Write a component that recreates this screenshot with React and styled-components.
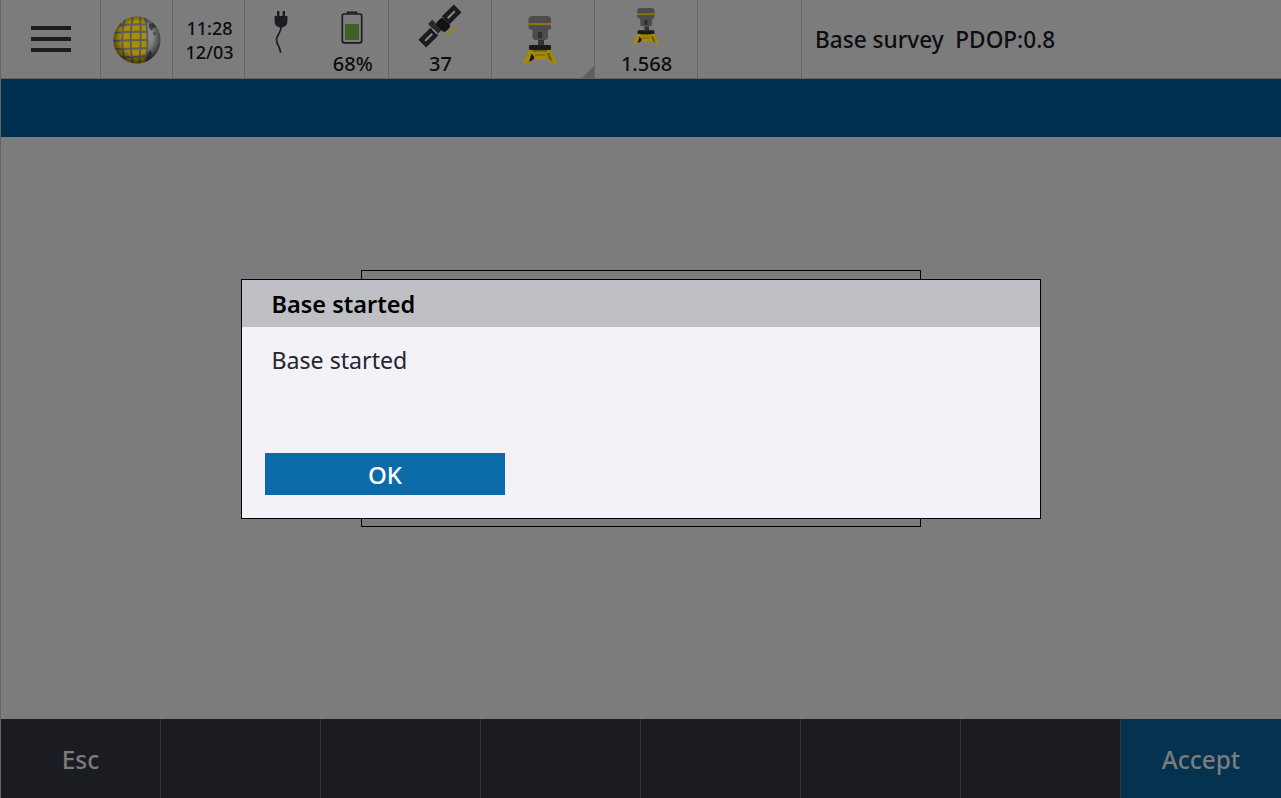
import styled, { createGlobalStyle } from 'styled-components';

const softKeys = ['Esc', '', '', '', '', '', ''];

const GlobalStyle = createGlobalStyle`
  html, body {
    margin: 0;
    padding: 0;
    height: 100%;
    background: #7c7c7d;
    font-family: "Noto Sans", "Open Sans", sans-serif;
    overflow: hidden;
  }
  #root {
    height: 100%;
  }
`;

const Globe = () => (
  <svg width="50" height="50" viewBox="0 0 50 50">
    <defs>
      <radialGradient id="sphere" cx="0.68" cy="0.4" r="0.62">
        <stop offset="0" stopColor="#949494" />
        <stop offset="0.6" stopColor="#737373" />
        <stop offset="1" stopColor="#3c3c3c" />
      </radialGradient>
      <radialGradient id="shade" cx="0.5" cy="0.45" r="0.52">
        <stop offset="0.65" stopColor="#000" stopOpacity="0" />
        <stop offset="1" stopColor="#000" stopOpacity="0.5" />
      </radialGradient>
      <clipPath id="ball">
        <circle cx="25" cy="25" r="23.5" />
      </clipPath>
    </defs>
    <circle cx="25" cy="25" r="23.5" fill="url(#sphere)" />
    <g clipPath="url(#ball)">
      <path d="M0 0H31C35 15 36 33 32 50H0Z" fill="#a88d07" />
      <path d="M37 9l5-1 3 4-4 1-1 3-3-3zM41 17l3 1-1 3zM35 40l3-5 2 3-2 6-3 3z" fill="#444" />
      <g fill="none" stroke="#5c5c5c" strokeWidth="1.900">
        <path d="M3 11C12 9.500 24 9 34 9.500" />
        <path d="M0 18C12 17 24 16.500 35 17" />
        <path d="M0 26C12 25.500 24 25 35.500 25" />
        <path d="M0 34C12 34 24 33.500 35 33" />
        <path d="M3 42C12 42.500 24 42 33.500 41" />
        <path d="M14 1C9 15 9 35 14 49" />
        <path d="M21 0C18 16 18 34 21 50" />
        <path d="M28 0C29 16 29 34 27 50" />
        <path d="M33 1C36 16 36.500 34 33 49" />
      </g>
    </g>
    <circle cx="25" cy="25" r="23.5" fill="url(#shade)" />
  </svg>
);

const Plug = () => (
  <svg width="14" height="42" viewBox="0 0 14 42">
    <path d="M3 0h2.400v5H8.600V0H11v5h2.400v5.500C13.400 14 10.500 16 8 16.500h-2C3 16 .6 14 .6 10.500V5H3z" fill="#1b1b22" />
    <path d="M7 16C7.500 21 2.500 24 2.500 29C2.500 33 6 36 6.500 41" fill="none" stroke="#1b1b22" strokeWidth="1.700" strokeLinecap="round" />
  </svg>
);

const Battery = () => (
  <svg width="22" height="33" viewBox="0 0 22 33">
    <path d="M6.500 3V1.200h9V3" fill="none" stroke="#1b1b22" strokeWidth="1.500" />
    <rect x="1.300" y="3" width="19.400" height="28.800" rx="2" fill="none" stroke="#1b1b22" strokeWidth="1.700" />
    <rect x="4" y="13" width="14" height="16" fill="#3f5f27" />
  </svg>
);

const Satellite = () => (
  <svg width="50" height="50" viewBox="0 0 50 50">
    <g transform="rotate(-45 25 25)">
      <rect x="0" y="19.500" width="17" height="11" fill="#1b1b1e" />
      <rect x="4" y="24" width="10" height="2" fill="#8a8a8a" />
      <rect x="33" y="19.500" width="17" height="11" fill="#1b1b1e" />
      <rect x="36" y="24" width="10" height="2" fill="#8a8a8a" />
      <rect x="17" y="22" width="16" height="6" fill="#b0b0b0" />
      <rect x="18" y="15" width="6" height="14" fill="#29292b" />
      <rect x="23" y="20" width="10" height="13" rx="3.500" fill="#121214" />
      <rect x="21" y="36" width="15" height="1.800" fill="#9a840e" />
    </g>
  </svg>
);

// receiver on a tripod, scaled by the width prop
const Rover = ({ width }) => (
  <svg width={width} viewBox="0 0 34 47">
    <path d="M5.500 3C5.500 1 7.500 0 10 0h13.500c2.500 0 4.500 1 4.500 3v8c0 2-1.500 3-3 3v7c0 2-1.500 3-3 3H12.500c-1.500 0-3-1-3-3v-7c-1.500 0-4-1-4-3z" fill="#4c4c4d" />
    <path d="M5.500 7h22.500v2.200H5.500z" fill="#8a7512" />
    <rect x="15" y="16" width="4" height="6" fill="#2e2e2f" />
    <rect x="15" y="24" width="6" height="5" fill="#333334" />
    <rect x="6" y="29" width="22" height="5" rx="1" fill="#1a1a1c" />
    <path d="M6 34H28L34 47H28L25 44H9L6 47H0Z" fill="#a48a0c" />
    <path d="M6 46L8.500 37.500L11.500 41L10.500 43.500z" fill="#161616" />
    <path d="M24 37h2.500l3.500 9-4.500-3z" fill="#6f5a14" />
    <rect x="12" y="38" width="10" height="2" fill="#8a7208" />
    <rect x="10" y="34" width="14" height="1.600" fill="#6f5e0e" />
  </svg>
);

const MenuIcon = () => (
  <svg width="40" height="26" viewBox="0 0 40 26" fill="#1b1b22">
    <rect width="40" height="4" />
    <rect y="11" width="40" height="4" />
    <rect y="22" width="40" height="4" />
  </svg>
);

export default function App() {
  return (
    <>
      <GlobalStyle />
      <Page>
        <TopBar>
          <MenuCell>
            <MenuIcon />
          </MenuCell>
          <IconCell>
            <Globe />
          </IconCell>
          <ClockCell>
            <span>11:28</span>
            <span>12/03</span>
          </ClockCell>
          <PowerCell>
            <PowerItem>
              <Plug />
            </PowerItem>
            <PowerItem>
              <Battery />
              <BatteryReading>68%</BatteryReading>
            </PowerItem>
          </PowerCell>
          <StatusCell>
            <Slot>
              <Satellite />
            </Slot>
            <Reading>37</Reading>
          </StatusCell>
          <StatusCell>
            <RoverSlot>
              <Rover width={34} />
            </RoverSlot>
            <Corner />
          </StatusCell>
          <StatusCell>
            <Slot>
              <Rover width={26} />
            </Slot>
            <Reading>1.568</Reading>
          </StatusCell>
          <SpareCell />
          <Title>Base survey  PDOP:0.8</Title>
        </TopBar>
        <Banner />
        <Content />
        <SoftKeys>
          {softKeys.map((label, i) => (
            <SoftKey key={i}>{label}</SoftKey>
          ))}
          <AcceptKey>Accept</AcceptKey>
        </SoftKeys>
      </Page>
      <Overlay>
        <BackPanel />
        <Dialog>
          <DialogTitle>Base started</DialogTitle>
          <DialogBody>
            <Message>Base started</Message>
            <OkButton>OK</OkButton>
          </DialogBody>
        </Dialog>
      </Overlay>
    </>
  );
}

const Page = styled.div`
  height: 798px;
  display: flex;
  flex-direction: column;
  border-left: 1px solid #656566;
  background: #7c7c7d;
`;

const TopBar = styled.header`
  height: 78px;
  flex: none;
  display: flex;
  border-bottom: 1px solid #656566;
`;

const Cell = styled.div`
  flex: none;
  height: 78px;
  box-sizing: border-box;
  border-right: 1px solid #656566;
  position: relative;
  color: #0c0c11;
`;

const MenuCell = styled(Cell)`
  width: 100px;
  padding: 26px 0 0 30px;
`;

const IconCell = styled(Cell)`
  width: 72px;
  display: flex;
  align-items: center;
  justify-content: center;
  padding-top: 1px;
`;

const ClockCell = styled(Cell)`
  width: 72px;
  display: flex;
  flex-direction: column;
  align-items: center;
  justify-content: center;
  font-size: 18px;
  font-weight: 500;
  line-height: 24px;
  padding-top: 1px;
  padding-left: 2px;
`;

const PowerCell = styled(Cell)`
  width: 144px;
  display: flex;
`;

const PowerItem = styled.div`
  width: 72px;
  padding-top: 11px;
  box-sizing: border-box;
  display: flex;
  flex-direction: column;
  align-items: center;
`;

const StatusCell = styled(Cell)`
  width: 103px;
  display: flex;
  flex-direction: column;
  align-items: center;
`;

const Slot = styled.div`
  height: 52px;
  display: flex;
  align-items: center;
  justify-content: center;
`;

const RoverSlot = styled.div`
  padding: 16px 7px 0 0;
`;

const SpareCell = styled(Cell)`
  width: 104px;
`;

const Reading = styled.div`
  font-size: 20px;
  font-weight: 500;
  line-height: 24px;
  padding-left: 1px;
  color: #0c0c11;
`;

const BatteryReading = styled(Reading)`
  margin-top: 8px;
`;

const Corner = styled.div`
  position: absolute;
  right: 0;
  bottom: 0;
  width: 0;
  height: 0;
  border-style: solid;
  border-width: 0 0 12px 12px;
  border-color: transparent transparent #5f5f60 transparent;
`;

const Title = styled.div`
  padding-left: 13px;
  display: flex;
  align-items: center;
  font-size: 22.6px;
  font-weight: 500;
  color: #0c0c11;
  white-space: pre;
`;

const Banner = styled.div`
  height: 58px;
  flex: none;
  background: #002e50;
`;

const Content = styled.main`
  flex: 1;
`;

const SoftKeys = styled.footer`
  height: 79px;
  flex: none;
  display: flex;
  background: #1b1b22;
`;

const SoftKey = styled.div`
  width: 160px;
  box-sizing: border-box;
  border-right: 1px solid #35353a;
  padding-top: 2px;
  display: flex;
  align-items: center;
  justify-content: center;
  font-size: 24.400px;
  font-weight: 500;
  color: #7c7c7d;
`;

const AcceptKey = styled(SoftKey)`
  flex: 1;
  border-right: none;
  background: #05324f;
`;

const Overlay = styled.div`
  position: fixed;
  inset: 0;
  display: grid;
  place-items: center;
`;

const BackPanel = styled.div`
  grid-area: 1 / 1;
  width: 560px;
  height: 257px;
  margin-bottom: 1px;
  box-sizing: border-box;
  border: 1px solid #000;
`;

const Dialog = styled.section`
  grid-area: 1 / 1;
  width: 800px;
  height: 240px;
  box-sizing: border-box;
  border: 1px solid #000;
  background: #f2f2f8;
  display: flex;
  flex-direction: column;
`;

const DialogTitle = styled.h2`
  margin: 0;
  height: 47px;
  flex: none;
  padding-left: 30px;
  background: #bfc0c5;
  color: #000;
  font-size: 23.500px;
  font-weight: 600;
  line-height: 48px;
`;

const DialogBody = styled.div`
  flex: 1;
  padding: 16px 23px 23px;
  display: flex;
  flex-direction: column;
  align-items: flex-start;
  justify-content: space-between;
`;

const Message = styled.div`
  padding-left: 7px;
  font-size: 23.150px;
  line-height: 34px;
  color: #26262f;
`;

const OkButton = styled.button`
  width: 240px;
  height: 42px;
  border: none;
  padding: 1px 0 0 1px;
  background: #0b6aa8;
  color: #fff;
  font-family: inherit;
  font-size: 24px;
  font-weight: 500;
`;
